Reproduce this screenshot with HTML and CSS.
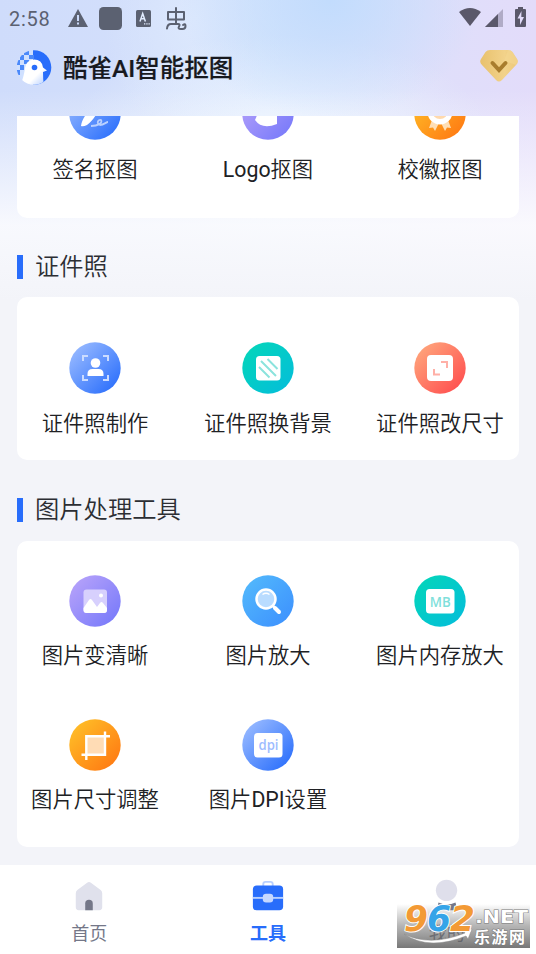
FILE: index.html
```
<!DOCTYPE html>
<html lang="zh-CN">
<head>
<meta charset="utf-8">
<title>酷雀AI智能抠图</title>
<link rel="stylesheet" href="styles.css">
</head>
<body>
<svg class="defs" width="0" height="0">
  <defs>
    <linearGradient id="blue" x1="0" y1="0" x2="1" y2="1"><stop offset=".12" stop-color="#94b7ff"/><stop offset=".85" stop-color="#3475fc"/></linearGradient>
    <linearGradient id="violet" x1="0" y1="0" x2="1" y2="1"><stop offset=".12" stop-color="#b3a0fa"/><stop offset=".88" stop-color="#7b7cfa"/></linearGradient>
    <linearGradient id="orange" x1="0" y1="0" x2="1" y2="1"><stop offset=".1" stop-color="#ffbd27"/><stop offset=".9" stop-color="#ff7b13"/></linearGradient>
    <linearGradient id="teal" x1="0" y1="0" x2="1" y2="1"><stop offset=".12" stop-color="#04d4bc"/><stop offset=".9" stop-color="#04bfd8"/></linearGradient>
    <linearGradient id="red" x1="0" y1="0" x2="1" y2="1"><stop offset=".12" stop-color="#ffa27a"/><stop offset=".9" stop-color="#ff5050"/></linearGradient>
    <linearGradient id="sky" x1="0" y1="0" x2="1" y2="1"><stop offset=".12" stop-color="#51b6fc"/><stop offset=".9" stop-color="#3e93fe"/></linearGradient>
    <linearGradient id="gold" x1="0" y1="0" x2="1" y2="0"><stop offset="0" stop-color="#e8c16d"/><stop offset=".65" stop-color="#f2d28a"/><stop offset="1" stop-color="#edc878"/></linearGradient>
    <linearGradient id="bird" x1="0" y1="0" x2="1" y2="1"><stop offset=".6" stop-color="#fff"/><stop offset="1" stop-color="#a9c7ff"/></linearGradient>
  </defs>
</svg>
<div class="app">
  <header class="top">
    <div class="status">
      <span class="clock">2:58</span>
      <svg class="status-icons" width="122" height="24" viewBox="0 0 122 24" fill="#5b6171">
        <path d="M11 2 21 20H1Z"/><path d="M10 8h2v6h-2zM10 15.500h2v2h-2z" fill="#cbdafa"/>
        <rect x="32" width="23" height="23" rx="4.500"/>
        <rect x="69" y="3" width="15" height="17" rx="1.500"/>
        <path d="m73 14.500 2.700-8 2.700 8M74 11.700h3.500" fill="none" stroke="#e3edff" stroke-width="1.500"/>
        <path d="M77 16.200h1.300v1.300H77zM79.300 16.200h1.300v1.300h-1.300zM81.500 16.200h1.300v1.300h-1.300z" fill="#e3edff"/>
        <path d="M101 5h16v7.500h-16zM109 1v15.500M100 21.500q.5-4.500 4-4.500h7q2.500 0 1 2.500t2 2.500h1.500q3 0 3-3t-2.500-1" fill="none" stroke="#5b6171" stroke-width="2" stroke-linecap="round" stroke-linejoin="round"/>
      </svg>
      <svg class="signal" width="68" height="22" viewBox="0 0 68 22" fill="#5a586a">
        <path d="M0 5Q11-3 22 5L11 19Z"/><path d="M26 20 44 2v18Z" fill="#b0abc6"/><path d="M26 20 39 7v13Z"/>
        <path d="M59 0h5v2h2q1 0 1 1v16q0 1-1 1h-9q-1 0-1-1V3q0-1 1-1h2Z"/><path d="m62.500 4-4 7.500h2.500V18l4-8h-2.700Z" fill="#e2dcfa"/>
      </svg>
    </div>
    <div class="brand">
      <svg width="36" height="36" viewBox="0 0 36 36">
        <defs><clipPath id="disc"><circle cx="18" cy="17.500" r="17.300"/></clipPath></defs>
        <g clip-path="url(#disc)">
          <path d="M0 0h36v36H0z" fill="#cfe0ff"/><path d="M17 0h19v36H17z" fill="#286dfb"/>
          <path d="M8 0h5v5H8zM13 5h5v4h-5zM4 5h4v5H4zM8 10h5v4H8zM0 10h4v5H0zM4 15h4v5H4zM0 20h4v5H0z" fill="#4b89fa"/>
          <path d="M4 36C7 29 8 25 9 18q1-8 9-8.500 8 0 9 8l4 3-4 1.500q0 9 1 14Z" fill="url(#bird)"/>
          <circle cx="18.500" cy="17.500" r="2.800" fill="#286dfb"/>
        </g>
      </svg>
      <h1>酷雀AI智能抠图</h1>
      <svg class="vip" width="38" height="34" viewBox="0 0 38 34">
        <path d="M10 1h18q3 0 4.500 2l4.500 7q2 3-1 6L22 31q-3 3-6 0L2 16q-3-3-1-6L5.500 3Q7 1 10 1Z" fill="url(#gold)"/>
        <path d="M28 1q3 0 4.500 2l4.500 7q2 3-1 6l-12-4Z" fill="#f5d996" opacity=".5"/>
        <path d="m12.500 14 6.500 7 6.500-7" fill="none" stroke="#a97d2d" stroke-width="4" stroke-linecap="round"/>
      </svg>
    </div>
  </header>

  <main>
    <section class="card clipped">
      <div class="tool"><svg viewBox="0 0 52 52"><circle cx="26" cy="26" r="25.700" fill="url(#blue)"/><path d="M12 38c1-8 8-17 17-23l4 4c-5 5-8 13-15 18q-4 2-6 1Z" fill="#fff"/><path d="M22 38c7 0 12-3 10-6-3-1-5 4-1 5 4 0 6-3 8-3" fill="none" stroke="#b9d0ff" stroke-width="1.800"/></svg><span>签名抠图</span></div>
      <div class="tool"><svg viewBox="0 0 52 52"><circle cx="26" cy="26" r="25.700" fill="url(#violet)"/><path d="M13 32l6-14h16v18q-15 6-22-4Z" fill="#fff"/></svg><span><b>Logo</b>抠图</span></div>
      <div class="tool"><svg viewBox="0 0 52 52"><circle cx="26" cy="26" r="25.700" fill="url(#orange)"/><path d="m18 32-3 8 4-.5 2 3.500 4-8h2l4 8 2-3.500 4 .5-3-8Z" fill="#ffdfb5"/><circle cx="26" cy="24" r="12.500" fill="#fff"/><circle cx="26" cy="23" r="8" fill="#ffd9ad"/></svg><span>校徽抠图</span></div>
    </section>

    <h2>证件照</h2>
    <section class="card portrait">
      <div class="tool"><svg viewBox="0 0 52 52"><circle cx="26" cy="26" r="25.700" fill="url(#blue)"/><path d="M14 19v-5h5M34 14h5v5M14 33v5h5M34 38h5v-5" fill="none" stroke="#cbdcff" stroke-width="2"/><circle cx="26.500" cy="21" r="4.800" fill="#fff"/><path d="M18.500 34v-2q0-5 5-5h6q5 0 5 5v2Z" fill="#fff"/></svg><span>证件照制作</span></div>
      <div class="tool"><svg viewBox="0 0 52 52"><circle cx="26" cy="26" r="25.700" fill="url(#teal)"/><rect x="14" y="14" width="24.500" height="24.500" rx="3.500" fill="#fff"/><path d="m25.500 17 10 10M19 19l15 15M17 25l10.500 10.500" stroke="#8be3dd" stroke-width="2"/></svg><span>证件照换背景</span></div>
      <div class="tool"><svg viewBox="0 0 52 52"><circle cx="26" cy="26" r="25.700" fill="url(#red)"/><rect x="13" y="13" width="26" height="26" rx="4" fill="#fff"/><path d="M27 20h6v6M20 27v5.500h6" fill="none" stroke="#ffb0a7" stroke-width="2"/></svg><span>证件照改尺寸</span></div>
    </section>

    <h2>图片处理工具</h2>
    <section class="card process">
      <div class="tool"><svg viewBox="0 0 52 52"><circle cx="26" cy="26" r="25.700" fill="url(#violet)"/><rect x="14.500" y="14.500" width="23.500" height="23.500" rx="3" fill="#d7d0fd"/><path d="M14.500 33 20 25q1.500-2 3 0l5 7 3-4q1.500-2 3 0l4 5v2q0 3-3 3H17.500q-3 0-3-3Z" fill="#fff"/><circle cx="32" cy="20.500" r="2" fill="#fff"/></svg><span>图片变清晰</span></div>
      <div class="tool"><svg viewBox="0 0 52 52"><circle cx="26" cy="26" r="25.700" fill="url(#sky)"/><circle cx="24" cy="24" r="9.500" fill="#b9dcff" stroke="#fff" stroke-width="2.500"/><path d="M20.500 19.500q3.500-2.500 7 0" fill="none" stroke="#fff" stroke-width="1.400"/><path d="m31 31 2 2" stroke="#fff" stroke-width="2.500"/><path d="m33 33 4 4" stroke="#fff" stroke-width="4" stroke-linecap="round"/></svg><span>图片放大</span></div>
      <div class="tool"><svg viewBox="0 0 52 52"><circle cx="26" cy="26" r="25.700" fill="url(#teal)"/><rect x="12" y="14" width="28.500" height="24.500" rx="3.500" fill="#fff"/><text class="glyph mb" x="26.200" y="31.500" textLength="21" lengthAdjust="spacingAndGlyphs">MB</text></svg><span>图片内存放大</span></div>
      <div class="tool"><svg viewBox="0 0 52 52"><circle cx="26" cy="26" r="25.700" fill="url(#orange)"/><path d="M17 17h19v19H17z" fill="#ffdcb5"/><path d="M17.300 41V17.300H41M12.500 35.700h23.500V12.500" fill="none" stroke="#fff" stroke-width="2.400"/></svg><span>图片尺寸调整</span></div>
      <div class="tool"><svg viewBox="0 0 52 52"><circle cx="26" cy="26" r="25.700" fill="url(#blue)"/><rect x="12" y="14" width="28.500" height="24.500" rx="3.500" fill="#fff"/><text class="glyph dpi" x="26.500" y="30.500" textLength="20" lengthAdjust="spacingAndGlyphs">dpi</text></svg><span>图片<b>DPI</b>设置</span></div>
    </section>
  </main>

  <nav>
    <div class="tab"><svg width="36" height="36" viewBox="0 0 36 36"><path d="M4 15q0-2 2-3.500L16 4q2-1.500 4 0l10 7.500q2 1.500 2 3.500v15q0 3-3 3H7q-3 0-3-3Z" fill="#e0e1ec"/><path d="M14 33v-7q0-4 4-4t4 4v7Z" fill="#747788"/></svg><span>首页</span></div>
    <div class="tab active"><svg width="36" height="36" viewBox="0 0 36 36"><rect x="13" y="3" width="10" height="8" rx="2.500" fill="none" stroke="#b7cfff" stroke-width="2"/><rect x="2" y="7" width="32" height="26" rx="4" fill="#286dfb"/><path d="M2 20h32" stroke="#b7cfff" stroke-width="2"/><rect x="12.500" y="15.500" width="11" height="9.500" rx="3.500" fill="#c5d8ff"/></svg><span>工具</span></div>
    <div class="tab"><svg width="36" height="36" viewBox="0 0 36 36"><circle cx="17.500" cy="12" r="11.300" fill="#dfdfeb"/><path d="M9 25q9 4 18 0l2 8H7Z" fill="#747788"/></svg><span>我的</span></div>
    <svg class="watermark" width="133" height="50" viewBox="0 0 133 50">
      <defs><linearGradient id="shade" x1="0" y1="0" x2="0" y2="1"><stop offset="0" stop-color="#777" stop-opacity="0"/><stop offset=".5" stop-color="#777" stop-opacity=".55"/><stop offset="1" stop-color="#555" stop-opacity=".8"/></linearGradient></defs>
      <rect y="6" width="133" height="44" fill="url(#shade)"/>
      <path d="M7 36q26 13 61-1l-2-3 9-1-4 10-2-3Q32 53 7 36Z" fill="#fff" stroke="#888" stroke-width=".5"/>
      <g class="digits"><text x="7" y="33" textLength="24" lengthAdjust="spacingAndGlyphs" fill="#f39a35">9</text><text x="30" y="33" textLength="24" lengthAdjust="spacingAndGlyphs" fill="#35a4e8">6</text><text x="53" y="33" textLength="25" lengthAdjust="spacingAndGlyphs" fill="#f39a35">2</text></g>
      <text class="net" x="78" y="25" textLength="53" lengthAdjust="spacingAndGlyphs">.NET</text>
      <text class="site" x="77" y="45" textLength="51">乐游网</text>
    </svg>
  </nav>
</div>
</body>
</html>
```
FILE: styles.css
```
* { box-sizing: border-box; }

body {
  margin: 0;
  font-family: Roboto, "Noto Sans CJK SC", sans-serif;
  color: #202124;
}

.defs { display: block; }

.app {
  display: flex;
  flex-direction: column;
  width: 536px;
  height: 954px;
  overflow: hidden;
  background:
    linear-gradient(180deg, rgba(252, 252, 254, 0) 90px, rgba(252, 252, 254, .9) 225px, #f3f4f9 300px),
    radial-gradient(ellipse 150px 120px at 330px 0, #c2dcfd 0, rgba(194, 220, 253, 0) 100%),
    radial-gradient(ellipse 210px 100px at 280px 135px, #edf4ff 0, rgba(237, 244, 255, 0) 100%),
    radial-gradient(ellipse 90px 120px at 195px 20px, #dce8fd 0, rgba(220, 232, 253, 0) 100%),
    linear-gradient(90deg, #cfdcfb 0, #d3dffb 30%, #d6e5fc 50%, #dfdffa 80%, #e3dcfa 100%);
}

.top { height: 116px; flex: none; }

.status {
  display: flex;
  align-items: flex-start;
  height: 38px;
  padding: 7px 9px 0 9px;
}

.clock {
  width: 58px;
  font-size: 20px;
  line-height: 24px;
  letter-spacing: .7px;
  color: #5b6171;
}

.signal { margin-left: auto; }

.brand {
  display: flex;
  align-items: center;
  height: 60px;
  padding: 0 18px 0 16px;
}

.brand h1 {
  margin: 1px 0 0 11px;
  font-size: 24.500px;
  font-weight: 500;
  line-height: 32px;
  color: #17191f;
  white-space: nowrap;
  -webkit-text-stroke: .2px #17191f;
}

.vip { margin: -4px 0 0 auto; }

main {
  flex: none;
  height: 749px;
  padding: 0 17px;
}

.card {
  display: grid;
  grid-template-columns: 156px 190px 154px;
  width: 502px;
  background: #fff;
  border-radius: 10px;
}

.clipped {
  height: 102px;
  overflow: hidden;
  border-radius: 0 0 10px 10px;
}

.clipped .tool { margin-top: -28px; }

.portrait { height: 163px; padding-top: 45px; }

.process {
  height: 306px;
  padding-top: 34px;
  grid-auto-rows: 144px;
}

.tool {
  display: flex;
  flex-direction: column;
  align-items: center;
}

.tool svg { width: 52px; height: 52px; flex: none; }

.tool span {
  margin-top: 14px;
  font-size: 21.300px;
  line-height: 32px;
  font-weight: 350;
  white-space: nowrap;
}

.tool b { font-weight: 400; }

.process .tool span { margin-top: 13px; }

h2 {
  display: flex;
  align-items: center;
  gap: 12px;
  height: 79px;
  margin: 0;
  padding-top: 18px;
  font-size: 24.300px;
  font-weight: 350;
  line-height: 36px;
  color: #2c2e33;
}

.portrait + h2 { height: 81px; }

h2::before {
  content: "";
  width: 6px;
  height: 24px;
  background: #286dfb;
}

.glyph {
  font-family: "Open Sans", "Noto Sans", sans-serif;
  text-anchor: middle;
  font-weight: 600;
}

.mb { font-size: 14px; fill: #80dfdb; }
.dpi { font-size: 14px; fill: #9dbcff; }

nav {
  position: relative;
  display: grid;
  grid-template-columns: repeat(3, 1fr);
  height: 89px;
  background: #fff;
}

.tab {
  display: flex;
  flex-direction: column;
  align-items: center;
  padding-top: 13px;
  font-size: 18px;
  line-height: 26px;
  color: #747788;
}

.tab svg { width: 34px; height: 36px; }
.tab span { margin-top: 7px; }
.active { color: #286dfb; font-weight: 700; }

.watermark {
  position: absolute;
  right: 6px;
  bottom: 6px;
}

.digits {
  font: italic 700 35px "DejaVu Sans", sans-serif;
  stroke: #fff;
  stroke-width: 2px;
  paint-order: stroke;
}

.net {
  font: 700 18px "DejaVu Sans", sans-serif;
  fill: #fff;
  stroke: #777;
  stroke-width: 1px;
  paint-order: stroke;
}

.site {
  font: 700 16px "Noto Sans CJK SC", sans-serif;
  fill: #fff;
  stroke: #777;
  stroke-width: 1px;
  paint-order: stroke;
}
```
